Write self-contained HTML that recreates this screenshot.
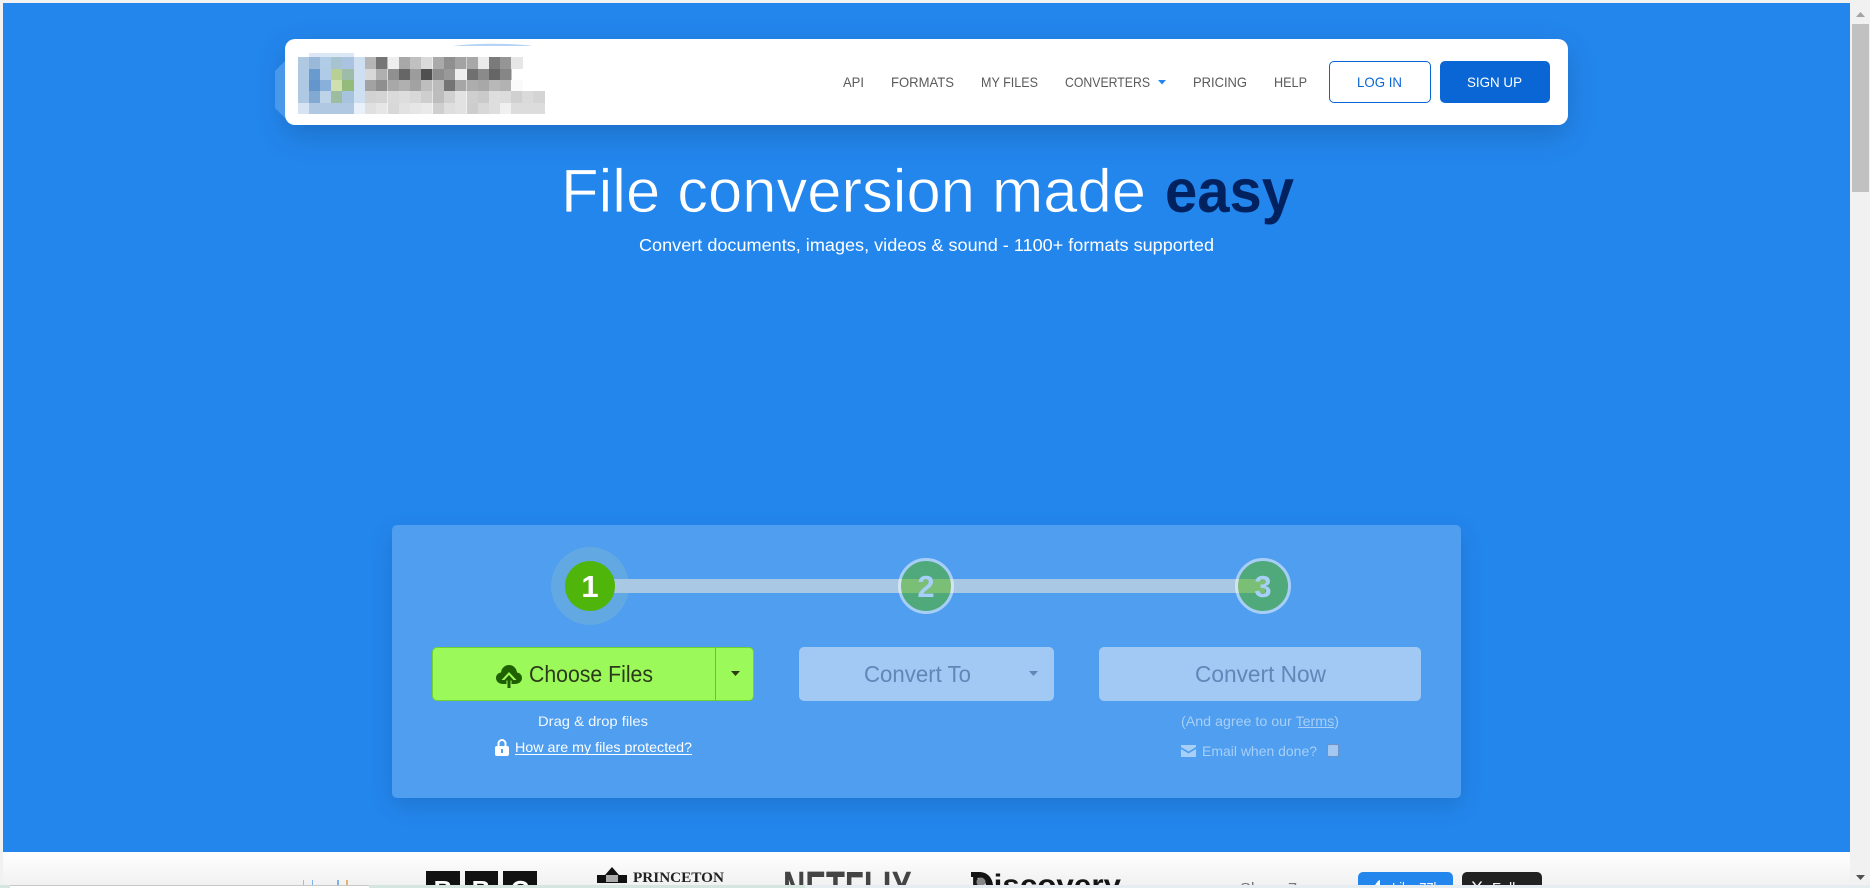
<!DOCTYPE html>
<html lang="en">
<head>
<meta charset="utf-8">
<title>File conversion made easy</title>
<style>
html,body{margin:0;padding:0;width:1870px;height:888px;overflow:hidden;background:#f1f1f1;font-family:"Liberation Sans",sans-serif}
.a{position:absolute;box-sizing:border-box}
#hero{left:3px;top:3px;width:1847px;height:849px;background:#2386ed}
#nav{left:285px;top:39px;width:1283px;height:86px;background:#fff;border-radius:10px;box-shadow:0 10px 30px rgba(0,0,0,.17)}
#card{left:392px;top:525px;width:1069px;height:273px;background:#4f9eef;border-radius:5px;box-shadow:0 8px 24px rgba(0,0,0,.13)}
#login{left:1329px;top:61px;width:102px;height:42px;border:1px solid #0a66d4;border-radius:5px;background:#fff}
#signup{left:1440px;top:61px;width:110px;height:42px;background:#0a66d4;border-radius:5px}
#bar{left:610px;top:579px;width:655px;height:14px;background:#a8c8e3}
#halo{left:551px;top:547px;width:78px;height:78px;border-radius:50%;background:#62a8e3}
#s1{left:565px;top:561px;width:50px;height:50px;border-radius:50%;background:#4fb50a}
.st{top:558px;width:56px;height:56px;border-radius:50%;background:#4fb50a;border:3px solid #fff;opacity:.5}
#choose{left:432px;top:647px;width:322px;height:54px;background:#9cf95a;border:1.5px solid #6fd22e;border-radius:5px}
#div{left:715px;top:648px;width:1px;height:52px;background:#6cc42c}
#to{left:799px;top:647px;width:255px;height:54px;background:#a2c8f4;border-radius:5px}
#now{left:1099px;top:647px;width:322px;height:54px;background:#a2c8f4;border-radius:5px}
#cb{left:1327px;top:744px;width:12px;height:13px;background:#a3c9f3;border:1px solid #7092c4;border-radius:2px}
#strip{left:3px;top:852px;width:1847px;height:33px;background:linear-gradient(#fff,#f1f1f1)}
#sbthumb{left:1852px;top:24px;width:17px;height:168px;background:#c1c1c1}
#bb1{left:0;top:885px;width:1870px;height:3px;background:#e6edf0}
#bb2{left:0;top:885px;width:805px;height:3px;background:#d5e6e0}
#bb3{left:10px;top:885px;width:359px;height:3px;background:#fff;border-top:1px solid #c8c8c8}
text{font-family:"Liberation Sans",sans-serif}
</style>
</head>
<body>
<div class="a" id="hero"></div>
<div class="a" id="nav"></div>
<div class="a" id="login"></div>
<div class="a" id="signup"></div>
<div class="a" id="card"></div>
<div class="a" id="halo"></div>
<div class="a" id="bar"></div>
<div class="a" id="s1"></div>
<div class="a st" style="left:898px"></div>
<div class="a st" style="left:1235px"></div>
<div class="a" id="choose"></div>
<div class="a" id="div"></div>
<div class="a" id="to"></div>
<div class="a" id="now"></div>
<div class="a" id="cb"></div>
<div class="a" id="strip"></div>
<div class="a" id="sbthumb"></div>

<svg class="a" style="left:0;top:0" width="1870" height="888" viewBox="0 0 1870 888">
<!-- pixelated logo -->
<path d="M285 61l-10 10v37l10 10z" fill="#4a98ea"/>
<path d="M453 46c20-3 60-3 80 0z" fill="#b5d3f5"/>
<g shape-rendering="crispEdges">
<rect x="309" y="53" width="45" height="5" fill="#dbe7f4"/>
<g id="r1">
<rect x="298" y="57" width="11.3" height="12" fill="#b0c9e3"/><rect x="309" y="57" width="11.3" height="12" fill="#9ab8d8"/><rect x="320" y="57" width="11.3" height="12" fill="#b0cce6"/><rect x="331" y="57" width="11.3" height="12" fill="#a7c3cf"/><rect x="342" y="57" width="12.3" height="12" fill="#a9c3e0"/><rect x="354" y="57" width="11.3" height="12" fill="#cfdff2"/>
<rect x="365" y="57" width="11.5" height="12" fill="#b5b5b5"/><rect x="376" y="57" width="11.5" height="12" fill="#757575"/><rect x="388" y="57" width="11.5" height="12" fill="#eee"/><rect x="399" y="57" width="11.5" height="12" fill="#a8a8a8"/><rect x="410" y="57" width="11.5" height="12" fill="#c0c0c0"/><rect x="421" y="57" width="11.5" height="12" fill="#dadada"/><rect x="433" y="57" width="11.5" height="12" fill="#aaa"/><rect x="444" y="57" width="11.5" height="12" fill="#8f8f8f"/><rect x="455" y="57" width="11.5" height="12" fill="#a3a3a3"/><rect x="467" y="57" width="11.5" height="12" fill="#a8a8a8"/><rect x="478" y="57" width="11.5" height="12" fill="#ebebeb"/><rect x="489" y="57" width="11.5" height="12" fill="#7a7a7a"/><rect x="500" y="57" width="11.5" height="12" fill="#959595"/><rect x="511" y="57" width="12" height="12" fill="#e6e6e6"/>
</g>
<g id="r2">
<rect x="298" y="69" width="11.3" height="11" fill="#b0c9e3"/><rect x="309" y="69" width="11.3" height="11" fill="#6a9bcf"/><rect x="320" y="69" width="11.3" height="11" fill="#b0cbe8"/><rect x="331" y="69" width="11.3" height="11" fill="#b9d094"/><rect x="342" y="69" width="12.3" height="11" fill="#9dbda8"/><rect x="354" y="69" width="11.3" height="11" fill="#cfdff2"/>
<rect x="365" y="69" width="11.5" height="11" fill="#d8d8d8"/><rect x="376" y="69" width="11.5" height="11" fill="#b0b0b0"/><rect x="388" y="69" width="11.5" height="11" fill="#909090"/><rect x="399" y="69" width="11.5" height="11" fill="#666"/><rect x="410" y="69" width="11.5" height="11" fill="#9c9c9c"/><rect x="421" y="69" width="11.5" height="11" fill="#4f4f4f"/><rect x="433" y="69" width="11.5" height="11" fill="#8d8d8d"/><rect x="444" y="69" width="11.5" height="11" fill="#999"/><rect x="455" y="69" width="11.5" height="11" fill="#eee"/><rect x="467" y="69" width="11.5" height="11" fill="#707070"/><rect x="478" y="69" width="11.5" height="11" fill="#8a8a8a"/><rect x="489" y="69" width="11.5" height="11" fill="#666"/><rect x="500" y="69" width="11.5" height="11" fill="#868686"/>
</g>
<g id="r3">
<rect x="298" y="80" width="11.3" height="11" fill="#b0c9e3"/><rect x="309" y="80" width="11.3" height="11" fill="#6496cb"/><rect x="320" y="80" width="11.3" height="11" fill="#88b0db"/><rect x="331" y="80" width="11.3" height="11" fill="#cfe0ae"/><rect x="342" y="80" width="12.3" height="11" fill="#95bb7c"/><rect x="354" y="80" width="11.3" height="11" fill="#cfdff2"/>
<rect x="365" y="80" width="11.5" height="11" fill="#a2a2a2"/><rect x="376" y="80" width="11.5" height="11" fill="#8f8f8f"/><rect x="388" y="80" width="11.5" height="11" fill="#a8a8a8"/><rect x="399" y="80" width="11.5" height="11" fill="#b0b0b0"/><rect x="410" y="80" width="11.5" height="11" fill="#a2a2a2"/><rect x="421" y="80" width="11.5" height="11" fill="#bebebe"/><rect x="433" y="80" width="11.5" height="11" fill="#bbb"/><rect x="444" y="80" width="11.5" height="11" fill="#747474"/><rect x="455" y="80" width="11.5" height="11" fill="#a6a6a6"/><rect x="467" y="80" width="11.5" height="11" fill="#adadad"/><rect x="478" y="80" width="11.5" height="11" fill="#a8a8a8"/><rect x="489" y="80" width="11.5" height="11" fill="#b8b8b8"/><rect x="500" y="80" width="11.5" height="11" fill="#b2b2b2"/><rect x="511" y="80" width="12" height="11" fill="#fafafa"/>
</g>
<g id="r4">
<rect x="298" y="91" width="11.3" height="12" fill="#b0c9e3"/><rect x="309" y="91" width="11.3" height="12" fill="#82a9d2"/><rect x="320" y="91" width="11.3" height="12" fill="#bcd3e8"/><rect x="331" y="91" width="11.3" height="12" fill="#9dbda0"/><rect x="342" y="91" width="12.3" height="12" fill="#a8c3dd"/><rect x="354" y="91" width="11.3" height="12" fill="#cfdff2"/>
<rect x="365" y="91" width="11.5" height="12" fill="#d2d2d2"/><rect x="376" y="91" width="11.5" height="12" fill="#d4d4d4"/><rect x="388" y="91" width="11.5" height="12" fill="#dadada"/><rect x="399" y="91" width="11.5" height="12" fill="#ddd"/><rect x="410" y="91" width="11.5" height="12" fill="#d8d8d8"/><rect x="421" y="91" width="11.5" height="12" fill="#cecece"/><rect x="433" y="91" width="11.5" height="12" fill="#bdbdbd"/><rect x="444" y="91" width="11.5" height="12" fill="#d0d0d0"/><rect x="455" y="91" width="11.5" height="12" fill="#e2e2e2"/><rect x="467" y="91" width="11.5" height="12" fill="#cfcfcf"/><rect x="478" y="91" width="11.5" height="12" fill="#cacaca"/><rect x="489" y="91" width="11.5" height="12" fill="#dedede"/><rect x="500" y="91" width="11.5" height="12" fill="#dcdcdc"/><rect x="511" y="91" width="11.5" height="12" fill="#d0d0d0"/><rect x="522" y="91" width="11.5" height="12" fill="#dadada"/><rect x="533" y="91" width="12" height="12" fill="#d4d4d4"/>
</g>
<g id="r5">
<rect x="298" y="103" width="11.3" height="11" fill="#d6e3f2"/><rect x="309" y="103" width="45.3" height="11" fill="#b0c8e2"/><rect x="354" y="103" width="11.3" height="11" fill="#e8f0fa"/>
<rect x="365" y="103" width="11.5" height="11" fill="#e0e0e0"/><rect x="376" y="103" width="11.5" height="11" fill="#e6e6e6"/><rect x="388" y="103" width="11.5" height="11" fill="#d8d8d8"/><rect x="399" y="103" width="11.5" height="11" fill="#e2e2e2"/><rect x="410" y="103" width="11.5" height="11" fill="#e6e6e6"/><rect x="421" y="103" width="11.5" height="11" fill="#eaeaea"/><rect x="433" y="103" width="11.5" height="11" fill="#cfcfcf"/><rect x="444" y="103" width="11.5" height="11" fill="#dedede"/><rect x="455" y="103" width="11.5" height="11" fill="#e2e2e2"/><rect x="467" y="103" width="11.5" height="11" fill="#cdcdcd"/><rect x="478" y="103" width="11.5" height="11" fill="#d8d8d8"/><rect x="489" y="103" width="11.5" height="11" fill="#dedede"/><rect x="500" y="103" width="11.5" height="11" fill="#f0f0f0"/><rect x="511" y="103" width="34" height="11" fill="#dcdcdc"/>
</g>
</g>

<!-- nav -->
<g font-size="14" fill="#5a5a5a">
<text x="843" y="87" textLength="21" lengthAdjust="spacingAndGlyphs">API</text>
<text x="891" y="87" textLength="63" lengthAdjust="spacingAndGlyphs">FORMATS</text>
<text x="981" y="87" textLength="57" lengthAdjust="spacingAndGlyphs">MY FILES</text>
<text x="1065" y="87" textLength="85" lengthAdjust="spacingAndGlyphs">CONVERTERS</text>
<text x="1193" y="87" textLength="54" lengthAdjust="spacingAndGlyphs">PRICING</text>
<text x="1274" y="87" textLength="33" lengthAdjust="spacingAndGlyphs">HELP</text>
<text x="1357" y="87" textLength="45" lengthAdjust="spacingAndGlyphs" fill="#0a66d4">LOG IN</text>
<text x="1467" y="87" textLength="55" lengthAdjust="spacingAndGlyphs" fill="#fff">SIGN UP</text>
</g>
<path d="M1158 80h8l-4 4.500z" fill="#2386ed"/>

<!-- hero -->
<text x="561" y="212" font-size="61" fill="#fff" stroke="#2386ed" stroke-width=".7" textLength="585" lengthAdjust="spacingAndGlyphs">File conversion made</text>
<text x="1165" y="212" font-size="61" font-weight="700" fill="#02225f" textLength="129" lengthAdjust="spacingAndGlyphs">easy</text>
<text x="639" y="251" font-size="17.5" fill="#fff" textLength="575" lengthAdjust="spacingAndGlyphs">Convert documents, images, videos &amp; sound - 1100+ formats supported</text>

<!-- steps -->
<text x="590" y="597" font-size="31" font-weight="700" fill="#fff" text-anchor="middle">1</text>
<text x="926" y="597" font-size="31" font-weight="700" fill="#a7cff7" text-anchor="middle">2</text>
<text x="1263" y="597" font-size="31" font-weight="700" fill="#a7cff7" text-anchor="middle">3</text>

<!-- choose -->
<path d="M503 684c-4 0-7-2.500-7-6 0-3 2-5 5-5.500 .5-4.500 4-7.500 8-7.500s7.500 3 8 7.500c3 .5 5 2.500 5 5.500 0 3.500-3 6-7 6z" fill="#1f6000"/>
<path d="M509 672l-7.500 8h5v9h5v-9h5z" fill="#9cf95a"/>
<path d="M509 675l-5 5.500h3.500V688h3v-7.500h3.500z" fill="#1f6000"/>
<text x="529" y="682" font-size="23" fill="#2a3a1a" textLength="124" lengthAdjust="spacingAndGlyphs">Choose Files</text>
<path d="M731 671h9l-4.500 5z" fill="#2a3a1a"/>

<text x="864" y="682" font-size="23" fill="#5f87b8" textLength="107" lengthAdjust="spacingAndGlyphs">Convert To</text>
<path d="M1029 671h9l-4.500 5z" fill="#5f87b8"/>
<text x="1195" y="682" font-size="23" fill="#5f87b8" textLength="131" lengthAdjust="spacingAndGlyphs">Convert Now</text>

<text x="538" y="726" font-size="14" fill="#f2f8fe" textLength="110" lengthAdjust="spacingAndGlyphs">Drag &amp; drop files</text>
<path d="M498.500 746v-2.500a3.500 3.500 0 0 1 7 0V746" fill="none" stroke="#fff" stroke-width="2"/>
<rect x="495" y="746" width="14" height="10" rx="2" fill="#fff"/>
<rect x="501" y="749" width="2" height="4" fill="#4f9eef"/>
<text x="515" y="752" font-size="14" fill="#fff" textLength="177" lengthAdjust="spacingAndGlyphs">How are my files protected?</text>
<rect x="515" y="754" width="177" height="1" fill="#fff"/>

<text x="1181" y="726" font-size="14" fill="#a7cff7" textLength="158" lengthAdjust="spacingAndGlyphs">(And agree to our Terms)</text>
<rect x="1298" y="727" width="36" height="1" fill="#a7cff7"/>
<path d="M1181 745h15v2l-7.500 4.500-7.500-4.500z" fill="#a7cff7"/>
<path d="M1181 749l7.500 4.500 7.500-4.500v8h-15z" fill="#a7cff7"/>
<text x="1202" y="756" font-size="14" fill="#a7cff7" textLength="115" lengthAdjust="spacingAndGlyphs">Email when done?</text>

<!-- logos -->
<rect x="426" y="871" width="34" height="20" fill="#111"/><rect x="465" y="871" width="33" height="20" fill="#111"/><rect x="503" y="871" width="34" height="20" fill="#111"/>
<g font-size="26" font-weight="700" fill="#fff" text-anchor="middle"><text x="443" y="899">B</text><text x="481" y="899">B</text><text x="520" y="899">C</text></g>
<path d="M597 875h8l7-8 7 8h8v8h-30z" fill="#111"/>
<rect x="606" y="875" width="12" height="7" fill="#aaa"/>
<text x="633" y="882" font-size="15" font-weight="700" fill="#222" style="font-family:'Liberation Serif',serif" textLength="91" lengthAdjust="spacingAndGlyphs">PRINCETON</text>
<text x="783" y="905" font-size="48" font-weight="700" fill="#444" textLength="129" lengthAdjust="spacingAndGlyphs">NETFLIX</text>
<text x="971" y="895" font-size="30" font-weight="700" fill="#151515" textLength="150" lengthAdjust="spacingAndGlyphs">Discovery</text>
<path d="M971 872h8c8 0 13 5 14 13h-7c-1-5-4-8-9-8h-6z" fill="#151515"/>
<circle cx="981" cy="882" r="4.500" fill="#888"/>
<text x="1240" y="893" font-size="15" fill="#777" textLength="57" lengthAdjust="spacingAndGlyphs">Share 7</text>
<rect x="1358" y="872" width="95" height="26" rx="5" fill="#2386ed"/>
<rect x="1462" y="872" width="80" height="26" rx="5" fill="#222"/>
<path d="M1375 885l3-4 2-1v5z" fill="#fff"/>
<text x="1392" y="893" font-size="15" fill="#fff" textLength="48" lengthAdjust="spacingAndGlyphs">Like 77k</text>
<text x="1471" y="893" font-size="17" fill="#fff" textLength="12" lengthAdjust="spacingAndGlyphs">X</text>
<text x="1492" y="893" font-size="15" fill="#fff" textLength="42" lengthAdjust="spacingAndGlyphs">Follow</text>
<g shape-rendering="crispEdges">
<rect x="303" y="880" width="1" height="5" fill="#e8b070"/><rect x="312" y="880" width="1" height="5" fill="#80b0e8"/><rect x="337" y="880" width="2" height="5" fill="#80b0e8"/><rect x="346" y="880" width="2" height="5" fill="#e8b070"/>
</g>
<!-- scrollbar arrows -->
<path d="M1856 17l4.500-5 4.500 5z" fill="#a3a3a3"/>
<path d="M1856 875l4.500 5 4.500-5z" fill="#505050"/>
</svg>

<div class="a" id="bb1"></div>
<div class="a" id="bb2"></div>
<div class="a" id="bb3"></div>
</body>
</html>
